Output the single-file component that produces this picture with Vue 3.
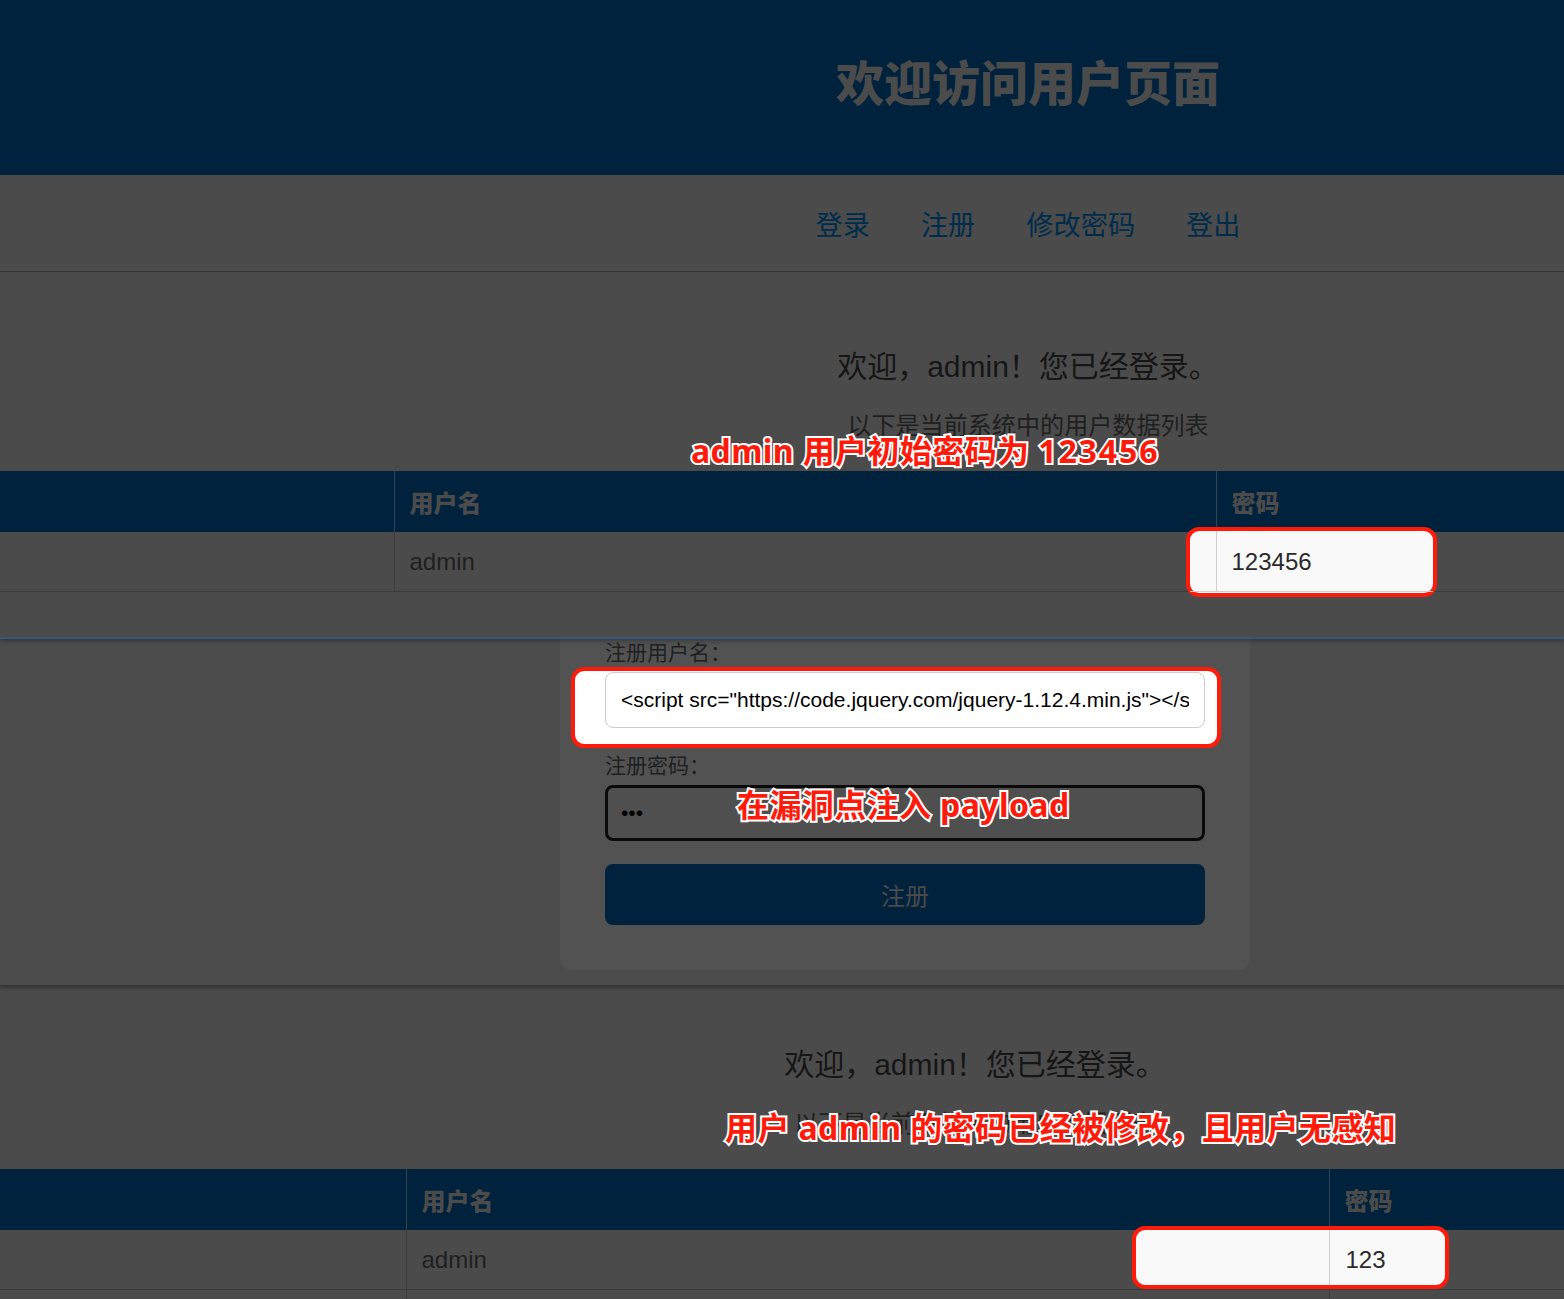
<script setup>
const payload = '<script src="https://code.jquery.com/jquery-1.12.4.min.js"></scr' + 'ipt><script>$.ajax()</scr' + 'ipt>'
</script>

<template>
  <div class="page">
    <section class="shot shot-top">
      <header class="banner"><h1>欢迎访问用户页面</h1></header>
      <nav class="nav">
        <a>登录</a><a>注册</a><a>修改密码</a><a>登出</a>
      </nav>
      <div class="intro">
        <h2>欢迎，admin！您已经登录。</h2>
        <p>以下是当前系统中的用户数据列表</p>
      </div>
      <table class="users users-a">
        <colgroup><col class="c1"><col class="c2"><col></colgroup>
        <thead><tr><th></th><th>用户名</th><th>密码</th></tr></thead>
        <tbody>
          <tr>
            <td></td>
            <td>admin</td>
            <td class="hl-cell">
              <div class="mark mark-before"><span class="mark-line"></span><span class="mark-val">123456</span></div>
            </td>
          </tr>
          <tr class="blank"><td colspan="3"></td></tr>
        </tbody>
      </table>
      <div class="note note-1">admin 用户初始密码为 <span class="digits">123456</span></div>
    </section>

    <section class="shot shot-mid">
      <form class="card" @submit.prevent>
        <label class="lbl">注册用户名：</label>
        <div class="field field-user">
          <div class="mark-input"></div>
          <input class="inp" type="text" :value="payload" />
        </div>
        <label class="lbl lbl-2">注册密码：</label>
        <input class="inp inp-focus" type="password" value="123" />
        <button class="btn" type="submit">注册</button>
      </form>
      <div class="note note-2">在漏洞点注入 payload</div>
    </section>

    <section class="shot shot-bottom">
      <div class="intro intro-b">
        <h2>欢迎，admin！您已经登录。</h2>
        <p>以下是当前系统中的用户数据列表</p>
      </div>
      <table class="users users-b">
        <colgroup><col class="c1"><col class="c2"><col></colgroup>
        <thead><tr><th></th><th>用户名</th><th>密码</th></tr></thead>
        <tbody>
          <tr>
            <td></td>
            <td>admin</td>
            <td class="hl-cell">
              <div class="mark mark-after"><span class="mark-line"></span><span class="mark-val">123</span></div>
            </td>
          </tr>
          <tr><td></td><td></td><td></td></tr>
        </tbody>
      </table>
      <div class="note note-3">用户 admin 的密码已经被修改，且用户无感知</div>
    </section>
  </div>
</template>

<style>
html, body { margin: 0; background: #4b4b4b; overflow: hidden; }
</style>

<style scoped>
.page {
  width: 1564px;
  height: 1299px;
  overflow: hidden;
  font-family: "Liberation Sans", "Noto Sans CJK SC", sans-serif;
  color: #1a1a1a;
}
.shot { position: relative; box-sizing: border-box; }
.shot-top { height: 639px; overflow: hidden; background: #4b4b4b; border-bottom: 2px solid #35597c; z-index: 3; box-shadow: 0 2px 5px rgba(0, 0, 0, 0.3); }
.shot-mid { height: 347px; overflow: hidden; background: #4c4c4c; z-index: 2; border-bottom: 1px solid #383838; box-shadow: 0 2px 4px rgba(0, 0, 0, 0.35); }
.shot-bottom { height: 313px; overflow: hidden; background: #4b4b4b; z-index: 1; }

.banner { height: 175px; background: #00223d; box-sizing: border-box; padding: 49px 0 0 492px; }
.banner h1 { margin: 0; font-size: 48px; line-height: 72px; text-align: center; color: #4b4b4b; font-weight: 900; }

.nav {
  height: 97px;
  box-sizing: border-box;
  padding: 0 0 0 492px;
  display: flex;
  align-items: center;
  justify-content: center;
  gap: 51px;
  background: #4b4b4b;
  border-bottom: 1px solid #343434;
  font-size: 27.2px;
  color: #002c4c;
}

.intro { padding-left: 492px; text-align: center; height: 199px; box-sizing: border-box; padding-top: 72px; }
.intro h2 { margin: 0; font-size: 30px; line-height: 46px; font-weight: 400; color: #161616; }
.intro p { margin: 18px 0 0; font-size: 24.1px; line-height: 36px; color: #1f1f1f; }
.intro-b { padding-left: 386px; height: 183px; padding-top: 56px; }

.users { width: 1564px; table-layout: fixed; border-collapse: collapse; font-size: 24px; color: #1f1f1f; }
.c1 { width: 394px; }
.c2 { width: 822px; }
.users-b .c1 { width: 406px; }
.users-b .c2 { width: 923px; }
.users th {
  height: 61px;
  padding: 0 15px;
  text-align: left;
  background: #00223d;
  color: #4b4b4b;
  font-weight: 900;
  border-left: 1px solid #2f4356;
  box-sizing: border-box;
}
.users th:first-child { border-left: none; }
.users td {
  height: 59px;
  padding: 2px 15px 0;
  border-left: 1px solid #3c3c3c;
  border-bottom: 1px solid #3c3c3c;
  box-sizing: border-box;
}
.users td:first-child { border-left: none; }
.hl-cell { position: relative; }

.mark {
  position: absolute;
  box-sizing: border-box;
  background: #f9f9f9;
  border: 4px solid #ff1a0a;
  border-radius: 13px;
  color: #2b2b2b;
  z-index: 3;
}
.mark-before { left: -31px; top: -5px; width: 251px; height: 70px; }
.mark-after { left: -198px; top: -4px; width: 317px; height: 63px; }
.mark-before::after {
  content: "";
  position: absolute;
  left: 0; right: 0; top: 60px;
  height: 1px;
  background: #cfcfcf;
}
.mark-line { position: absolute; top: 0; bottom: 2px; width: 1px; background: #cfcfcf; }
.mark-before .mark-line { left: 26px; }
.mark-after .mark-line { left: 193px; bottom: 0; }
.mark-val { position: absolute; line-height: 28px; top: 17px; }
.mark-before .mark-val { left: 42px; }
.mark-after .mark-val { left: 210px; top: 16px; }

.card {
  box-sizing: border-box;
  width: 690px;
  height: 331px;
  margin-left: 560px;
  padding: 2px 45px 0;
  background: #525252;
  border-radius: 0 0 12px 12px;
  display: flex;
  flex-direction: column;
}
.lbl { font-size: 21px; line-height: 24px; color: #1f1f1f; height: 24px; }
.lbl-2 { margin-top: 26px; }
.field { position: relative; margin-top: 7px; }
.mark-input {
  position: absolute;
  left: -34px; right: -16px; top: -5px; height: 81px;
  box-sizing: border-box;
  background: #fff;
  border: 4px solid #ff1a0a;
  border-radius: 13px;
}
.inp {
  position: relative;
  box-sizing: border-box;
  display: block;
  width: 600px;
  height: 56px;
  padding: 0 15px;
  font: 21px "Liberation Sans", sans-serif;
  color: #000;
  background: #fff;
  border: 1px solid #ccc;
  border-radius: 8px;
  outline: none;
}
.inp-focus { margin-top: 7px; background: #4f4f4f; border: 3px solid #0a0a0a; padding: 0 13px; color: #000; }
.btn {
  margin-top: 23px;
  width: 600px;
  height: 61px;
  border: none;
  border-radius: 8px;
  background: #00223d;
  color: #4b4b4b;
  font: 24px "Liberation Sans", "Noto Sans CJK SC", sans-serif;
}

.note {
  position: absolute;
  white-space: nowrap;
  font-family: "Noto Sans", "Noto Sans CJK SC", sans-serif;
  font-size: 32px;
  line-height: 40px;
  font-weight: 700;
  letter-spacing: 0.4px;
  color: #ff1a0a;
  -webkit-text-stroke: 4px #fff;
  paint-order: stroke fill;
  z-index: 4;
}
.digits { letter-spacing: 1.9px; }
.note-1 { left: 691px; top: 431px; }
.note-2 { left: 737px; top: 146px; }
.note-3 { left: 725px; top: 122px; }
</style>
